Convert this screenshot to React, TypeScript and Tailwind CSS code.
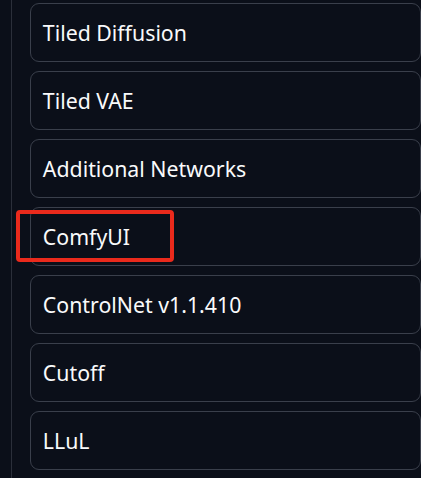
const items = [
  "Tiled Diffusion",
  "Tiled VAE",
  "Additional Networks",
  "ComfyUI",
  "ControlNet v1.1.410",
  "Cutoff",
  "LLuL",
];

export default function App() {
  return (
    <div
      className="relative h-[478px] w-[421px] overflow-hidden bg-[#0b0f19]"
      style={{ fontFamily: '"Source Sans Pro", "Noto Sans", sans-serif' }}
    >
      <div className="flex h-full">
        <div className="ml-[11px] w-px bg-[#2b2f3a]" />
        <div className="ml-[18px] flex w-[460px] flex-col gap-[9px] pt-[3px]">
          {items.map((t) => (
            <div
              key={t}
              className="flex h-[59px] items-center rounded-[9px] border border-[#3a3f4b] bg-[#0b0f19] pl-[12px] pt-[1px] text-[21.3px] text-[#f9fafb]"
            >
              {t}
            </div>
          ))}
        </div>
      </div>
      <div className="absolute left-[16px] top-[210px] h-[52px] w-[158px] rounded-[4px] border-[4px] border-[#ea2a1c]" />
    </div>
  );
}
